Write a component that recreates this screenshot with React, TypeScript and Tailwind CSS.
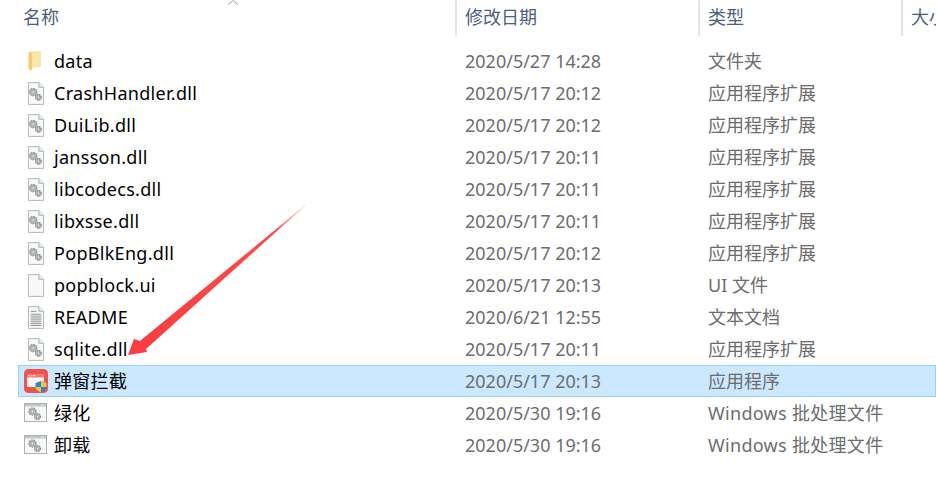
import React from "react";

type Kind = "folder" | "dll" | "blank" | "text" | "app" | "bat";

const files: { name: string; date: string; type: string; kind: Kind; selected?: boolean }[] = [
  { name: "data", date: "2020/5/27 14:28", type: "文件夹", kind: "folder" },
  { name: "CrashHandler.dll", date: "2020/5/17 20:12", type: "应用程序扩展", kind: "dll" },
  { name: "DuiLib.dll", date: "2020/5/17 20:12", type: "应用程序扩展", kind: "dll" },
  { name: "jansson.dll", date: "2020/5/17 20:11", type: "应用程序扩展", kind: "dll" },
  { name: "libcodecs.dll", date: "2020/5/17 20:11", type: "应用程序扩展", kind: "dll" },
  { name: "libxsse.dll", date: "2020/5/17 20:11", type: "应用程序扩展", kind: "dll" },
  { name: "PopBlkEng.dll", date: "2020/5/17 20:12", type: "应用程序扩展", kind: "dll" },
  { name: "popblock.ui", date: "2020/5/17 20:13", type: "UI 文件", kind: "blank" },
  { name: "README", date: "2020/6/21 12:55", type: "文本文档", kind: "text" },
  { name: "sqlite.dll", date: "2020/5/17 20:11", type: "应用程序扩展", kind: "dll" },
  { name: "弹窗拦截", date: "2020/5/17 20:13", type: "应用程序", kind: "app", selected: true },
  { name: "绿化", date: "2020/5/30 19:16", type: "Windows 批处理文件", kind: "bat" },
  { name: "卸载", date: "2020/5/30 19:16", type: "Windows 批处理文件", kind: "bat" },
];

const Gear = ({ cx, cy, r }: { cx: number; cy: number; r: number }) => (
  <g>
    <circle cx={cx} cy={cy} r={r} fill="#b4b8bb" stroke="#85898c" strokeWidth="1.2" strokeDasharray="1.5 1" />
    <circle cx={cx} cy={cy} r={r * 0.38} fill="#eef0f1" stroke="#8f9396" strokeWidth="0.6" />
  </g>
);

const Page = ({ children }: { children?: React.ReactNode }) => (
  <>
    <path d="M1.500 .5H12.500L17.500 5.500V23.500H1.500Z" fill="#f7f8f8" stroke="#b0b4b7" />
    <path d="M12.500 .5V5.500H17.500" fill="#e6e8e9" stroke="#b0b4b7" />
    {children}
  </>
);

const FileIcon = ({ kind }: { kind: Kind }) => {
  if (kind === "folder") {
    return (
      <svg className="-ml-[2px]" width="14" height="20" viewBox="0 0 14 22">
        <path d="M0 1L13.500 0V17L4 18.500V21.500L0 20Z" fill="#f8dc90" />
        <path d="M0 1L3.500 2.500V21L0 20Z" fill="#f1cc70" />
        <path d="M4 2.500L13.500 0V16.500L4 18Z" fill="#fbe6ae" />
      </svg>
    );
  }
  if (kind === "dll") {
    return (
      <svg width="18" height="23" viewBox="0 0 19 24">
        <Page>
          <Gear cx={6.5} cy={10.5} r={3.8} />
          <Gear cx={12} cy={16} r={3.1} />
        </Page>
      </svg>
    );
  }
  if (kind === "blank") {
    return (
      <svg width="18" height="23" viewBox="0 0 19 24">
        <Page />
      </svg>
    );
  }
  if (kind === "text") {
    return (
      <svg width="18" height="23" viewBox="0 0 19 24">
        <Page>
          <path d="M4 5.500H10M4 8.500H15M4 10.500H15M4 12.500H15M4 14.500H15M4 16.500H15M4 18.500H15M4 20.500H15" stroke="#8b9094" strokeWidth="1" />
        </Page>
      </svg>
    );
  }
  if (kind === "bat") {
    return (
      <svg width="23" height="20" viewBox="0 0 23 20">
        <rect x=".5" y=".5" width="22" height="18" fill="#f7f8f8" stroke="#adb1b4" />
        <rect x="1" y="1" width="21" height="2.500" fill="#c4c7c9" />
        <path d="M17 2H18M19 2H20" stroke="#f5f5f5" />
        <Gear cx={8.5} cy={8.5} r={3.6} />
        <Gear cx={13.5} cy={13.5} r={3} />
      </svg>
    );
  }
  return (
    <svg width="24" height="24" viewBox="0 0 24 24">
      <rect width="24" height="24" rx="4.500" fill="#f0524c" />
      <rect x="3" y="5" width="17" height="13" rx="1" fill="#fbf3f2" />
      <rect x="3" y="5" width="17" height="3.500" fill="#f27a70" />
      <path d="M4.500 6.700H6M7 6.700H8.500M9.500 6.700H11" stroke="#fff" strokeWidth="1" />
      <path d="M17 12L22.500 14V18C22.500 20.500 20 22.500 17 23.500C14 22.500 11.500 20.500 11.500 18V14Z" fill="#2d83d6" />
      <path d="M17 12L22.500 14V18H17ZM17 18H11.500C11.500 20.500 14 22.500 17 23.500Z" fill="#f5c23c" />
    </svg>
  );
};

export default function App() {
  return (
    <div className="relative h-[495px] w-[936px] overflow-hidden bg-white font-['Noto_Sans','Noto_Sans_CJK_SC',sans-serif] text-[18px]">
      <div className="flex h-9 text-[#4c607a]">
        <div className="w-[455px] pl-[23px] leading-[34px]">名称</div>
        <div className="w-[243px] border-l-2 border-[#e5e5e5] pl-[8px] leading-[34px]">修改日期</div>
        <div className="w-[203px] border-l-2 border-[#e5e5e5] pl-[8px] leading-[34px]">类型</div>
        <div className="w-[35px] overflow-hidden whitespace-nowrap border-l-2 border-[#e5e5e5] pl-[8px] leading-[34px]">大小</div>
      </div>
      <div className="pt-[9px]">
        {files.map((f) => (
          <div
            key={f.name}
            className={`ml-[18px] flex h-8 items-center border ${f.selected ? "border-[#99d1ff] bg-[#cce8ff]" : "border-transparent"}`}
          >
            <div className="flex w-[33px] shrink-0 items-center justify-center">
              <FileIcon kind={f.kind} />
            </div>
            <div className="w-[413px] shrink-0 pl-[2px] tracking-[0.3px] text-black">{f.name}</div>
            <div className="w-[243px] shrink-0 text-[#6d6d6d]">{f.date}</div>
            <div className={`text-[#6d6d6d] ${f.kind === "bat" ? "tracking-[0.3px]" : ""}`}>{f.type}</div>
          </div>
        ))}
      </div>
      <svg className="absolute left-[225px] top-0" width="16" height="6" viewBox="0 0 16 6">
        <path d="M3 4.500L8 .5L13 4.500" fill="none" stroke="#a0a0a0" />
      </svg>
      <svg className="absolute left-0 top-0" width="936" height="495" viewBox="0 0 936 495">
        <defs>
          <linearGradient id="arrow" x1="311" y1="200" x2="128" y2="355" gradientUnits="userSpaceOnUse">
            <stop offset="0" stopColor="#ff4a4a" stopOpacity="0.15" />
            <stop offset="0.2" stopColor="#ff4a4a" />
            <stop offset="1" stopColor="#fb3b3f" />
          </linearGradient>
        </defs>
        <path d="M311.500 200L140 341L134 339L128 355L147 352L146 349Z" fill="url(#arrow)" />
      </svg>
    </div>
  );
}
